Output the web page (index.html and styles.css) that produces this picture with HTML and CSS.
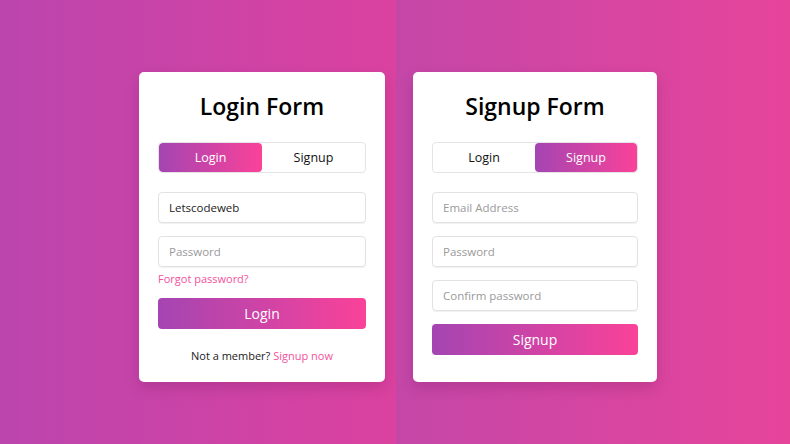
FILE: index.html
```html
<!DOCTYPE html>
<html lang="en">
<head>
<meta charset="utf-8">
<title>Login &amp; Signup Form</title>
<link rel="stylesheet" href="styles.css">
</head>
<body>
  <div class="panel panel-left">
    <div class="card card-login">
      <h1 class="title">Login Form</h1>
      <div class="tabs">
        <div class="tab tab-active">Login</div>
        <div class="tab">Signup</div>
      </div>
      <div class="field field-filled">Letscodeweb</div>
      <div class="field field-gap">Password</div>
      <a class="forgot">Forgot password?</a>
      <div class="btn btn-login">Login</div>
      <p class="footer">Not a member? <a class="link">Signup now</a></p>
    </div>
  </div>
  <div class="panel panel-right">
    <div class="card card-signup">
      <h1 class="title">Signup Form</h1>
      <div class="tabs">
        <div class="tab">Login</div>
        <div class="tab tab-active">Signup</div>
      </div>
      <div class="field">Email Address</div>
      <div class="field field-gap">Password</div>
      <div class="field field-gap">Confirm password</div>
      <div class="btn btn-signup">Signup</div>
    </div>
  </div>
</body>
</html>
```
FILE: styles.css
```css
* { box-sizing: border-box; }
html, body { margin: 0; padding: 0; }
body {
  width: 790px;
  height: 444px;
  display: flex;
  overflow: hidden;
  font-family: "Open Sans", "Noto Sans", sans-serif;
  color: #111;
}
.panel { height: 444px; padding-top: 72px; }
.panel-left {
  width: 396px;
  padding-left: 139px;
  background: linear-gradient(to right, #bb45ad, #db42a0);
}
.panel-right {
  flex: 1;
  padding-left: 17px;
  background: linear-gradient(to right, #c447a8, #e6449b);
}
.card {
  background: #fff;
  border-radius: 5px;
  box-shadow: 0 6px 14px rgba(80, 0, 60, 0.18);
  display: flex;
  flex-direction: column;
  padding: 18px 19px 0;
  height: 310px;
}
.card-login { width: 246px; }
.card-signup { width: 244px; }
.title {
  margin: 0;
  font-size: 23px;
  line-height: 32px;
  font-weight: 600;
  text-align: center;
  color: #000;
}
.tabs {
  margin-top: 20px;
  height: 31px;
  display: flex;
  border: 1px solid #e4e4e4;
  border-radius: 4px;
  overflow: hidden;
}
.tab {
  flex: 1;
  display: flex;
  align-items: center;
  justify-content: center;
  font-size: 12.5px;
  font-weight: 500;
  color: #111;
}
.tab-active {
  color: #fff;
  background: linear-gradient(to right, #a445b2, #fa4299);
  border-radius: 4px;
}
.field {
  margin-top: 19px;
  height: 31px;
  border: 1px solid #e2e2e2;
  border-radius: 4px;
  box-shadow: 0 1px 1px rgba(0,0,0,0.06);
  padding: 0 10px;
  display: flex;
  align-items: center;
  font-size: 11.5px;
  color: #9a9a9a;
}
.field-filled { color: #222; }
.field-gap { margin-top: 13px; }
.forgot {
  margin-top: 3px;
  font-size: 11px;
  line-height: 18px;
  color: #f4529c;
}
.btn {
  height: 31px;
  border-radius: 4px;
  background: linear-gradient(to right, #a445b2, #fa4299);
  color: #fff;
  font-size: 14px;
  font-weight: 500;
  display: flex;
  align-items: center;
  justify-content: center;
}
.btn-login { margin-top: 10px; }
.btn-signup { margin-top: 13px; }
.footer {
  margin: 18px 0 0;
  font-size: 11px;
  line-height: 18px;
  text-align: center;
  color: #1a1a1a;
}
.link { color: #f4529c; }
```
